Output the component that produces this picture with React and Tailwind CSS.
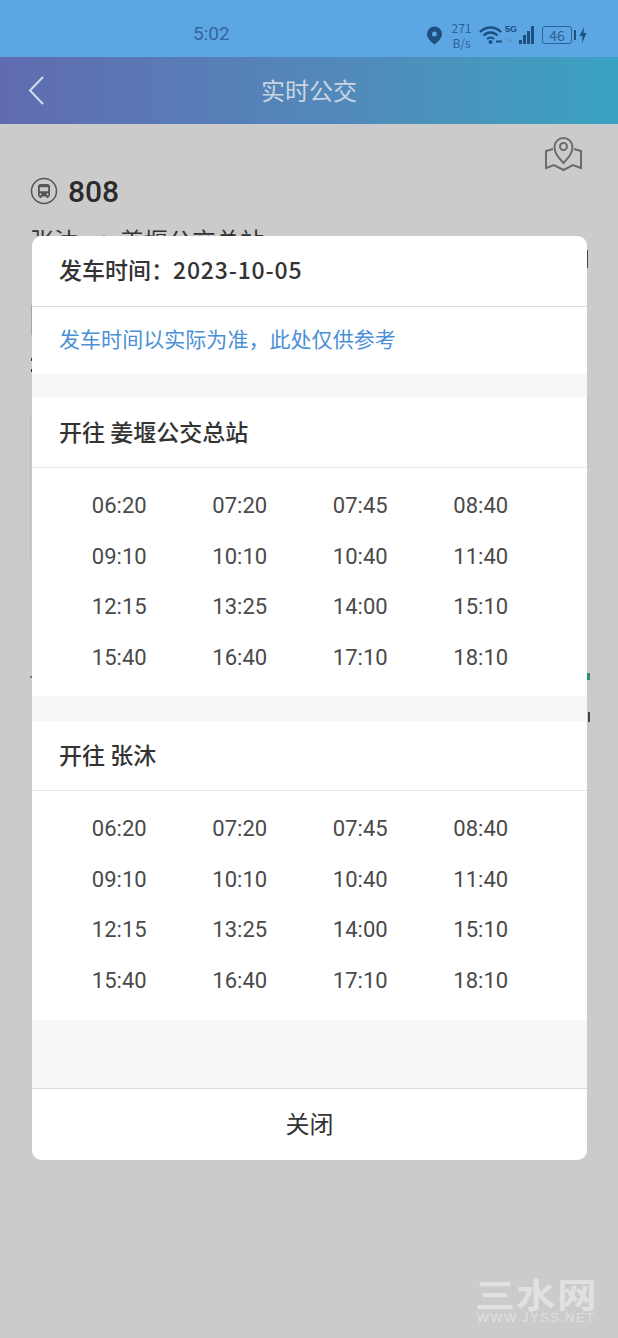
const times = [
  "06:20", "07:20", "07:45", "08:40",
  "09:10", "10:10", "10:40", "11:40",
  "12:15", "13:25", "14:00", "15:10",
  "15:40", "16:40", "17:10", "18:10",
];

function StatusIcons() {
  return (
    <div className="absolute left-[426px] top-[21px] flex h-7 items-center text-[#1d4f80]">
      <svg width="17" height="20" viewBox="0 0 17 20" className="mr-[8px]">
        <path fillRule="evenodd" fill="currentColor" d="M8.500 1.500a7.500 7.500 0 0 1 7.500 7.500c0 4-3.800 7.500-7.500 10.500C4.800 16.500 1 13 1 9a7.500 7.500 0 0 1 7.500-7.500zm0 5a2.500 2.500 0 1 0 0 5 2.500 2.500 0 0 0 0-5z" />
      </svg>
      <div className="flex w-[21px] flex-col items-center text-[12px] leading-[15px] text-[#2e6295]">
        <span>271</span>
        <span>B/s</span>
      </div>
      <svg width="24" height="20" viewBox="0 0 24 20" fill="none" stroke="currentColor" className="ml-[7px]">
        <path d="M1 7c6-6 15-6 21 0" strokeWidth="2.400" />
        <path d="M4.500 10.500c4-4 10-4 14 0" strokeWidth="2.400" />
        <path d="M8 14c2-2 5-2 7 0" strokeWidth="2.200" />
        <circle cx="11.500" cy="17" r="2" fill="currentColor" stroke="none" />
        <path d="M17 16.500h6" strokeWidth="2" />
      </svg>
      <div className="relative ml-[2px] h-5 w-[12px] font-['Liberation_Sans',sans-serif] text-[9px] font-bold leading-[9px]">
        <span className="absolute left-0 top-0">5G</span>
        <span className="absolute left-[1px] top-[11px] text-[6px] font-normal text-[#5a8bbb]">1s</span>
      </div>
      <div className="ml-[2px] flex h-[18px] items-end gap-[1px]">
        <div className="h-[4px] w-[3px] bg-current" />
        <div className="h-[9px] w-[3px] bg-current" />
        <div className="h-[13px] w-[3px] bg-current" />
        <div className="h-[18px] w-[3px] bg-current" />
      </div>
      <div className="ml-[8px] flex h-[18px] w-[30px] items-center justify-center rounded-[3px] border-[1.500px] border-current text-[14px] leading-none text-[#2e6295]">
        46
      </div>
      <div className="ml-[2px] h-[10px] w-[2px] bg-current" />
      <svg width="8" height="16" viewBox="0 0 8 16" className="ml-[3px]">
        <path fill="currentColor" d="M5 0 0.500 9H3.500L3 16l4.500-10H4.500z" />
      </svg>
    </div>
  );
}

function TimeTable({ title }) {
  return (
    <div className="bg-white">
      <div className="flex h-[70px] items-center border-b border-[#e2e4e6] pb-[2px] pl-[27px] text-[23px] font-medium text-[#333333]">
        {title}
      </div>
      <div className="grid grid-cols-[repeat(4,120.5px)] pb-[13.500px] pl-[27px] pt-[12.500px]">
        {times.map((t) => (
          <div key={t} className="flex h-[50.500px] items-center justify-center font-['Roboto',sans-serif] text-[22px] text-[#4a4a4a]">
            {t}
          </div>
        ))}
      </div>
    </div>
  );
}

export default function App() {
  return (
    <div className="relative h-[1338px] w-[618px] overflow-hidden bg-[#cbcbcb] font-['Noto_Sans_CJK_SC','Noto_Sans',sans-serif]">
      <div className="relative h-[57px] bg-[#5ca6e4]">
        <span className="absolute left-[193px] top-[22px] font-['Roboto',sans-serif] text-[19px] leading-6 text-[#34669a]">5:02</span>
        <StatusIcons />
      </div>
      <div className="relative flex h-[67px] items-center justify-center bg-gradient-to-r from-[#5f6bb0] to-[#39a2c2]">
        <svg width="20" height="32" viewBox="0 0 20 32" fill="none" stroke="#d3deea" strokeWidth="2" className="absolute left-[26px] top-[18px]">
          <path d="M17 2 4 15.500 17 29" />
        </svg>
        <span className="pb-[2px] text-[24px] text-[#c9d5e2]">实时公交</span>
      </div>

      {/* page behind the dialog, only its edges show */}
      <div className="pl-[30px] pr-[28px]">
        <div className="flex justify-end pt-[11px]">
          <svg width="38" height="37" viewBox="0 0 38 37" fill="none" stroke="#6b6b6b" strokeWidth="2" className="mr-[7px]">
            <path d="M18.500 28c-5.500-6-9-10-9-16a9 9 0 0 1 18 0c0 6-3.500 10-9 16z" />
            <circle cx="18.500" cy="11.500" r="3.500" />
            <path d="M8 14l-7 2v17l8-3 9.500 5 9.500-5 8 3V16l-7-2" />
          </svg>
        </div>
        <div className="-mt-[2px] flex h-[42px] items-center">
          <svg width="28" height="28" viewBox="0 0 28 28" fill="none">
            <circle cx="14" cy="14" r="12.500" stroke="#555555" strokeWidth="1.500" />
            <path fill="#555555" d="M8 9.500c0-1.500 1-2.500 2.500-2.500h7c1.500 0 2.500 1 2.500 2.500v10h-1.500v1.500h-2v-1.500h-5v1.500h-2v-1.500H8zm1.800.700v4h8.400v-4zm.7 6a1 1 0 1 0 0 2 1 1 0 0 0 0-2zm7 0a1 1 0 1 0 0 2 1 1 0 0 0 0-2z" />
          </svg>
          <span className="ml-[10px] font-['Roboto',sans-serif] text-[30px] font-medium text-[#2b2b2b]">808</span>
        </div>
        <div className="mb-[14px] mt-[12px] h-[12px] overflow-hidden whitespace-nowrap text-[24px] leading-8 text-[#333333]">
          张沐<span className="mx-[9px]">→</span>姜堰公交总站
        </div>
        <div className="flex h-[18px] justify-end">
          <div className="mr-[2px] w-[2px] bg-[#444444]" />
        </div>
        <div className="ml-[1px] mt-[37px] h-[30px] border-l-2 border-[#9aa8bc]" />
        <div className="mt-[23px] flex h-[14px] flex-col justify-between pl-[1px]">
          <div className="h-[3px] w-[2px] bg-[#333333]" />
          <div className="h-[3px] w-[2px] bg-[#333333]" />
        </div>
        <div className="mt-[26px] flex h-[162px] items-start justify-between">
          <div className="mt-[17px] h-[145px] w-[1px] bg-[#bdbdbd]" />
          <div className="mr-[1px] h-[69px] w-[2px] bg-[#c0c6cf]" />
        </div>
        <div className="mt-[113px] flex h-[7px] items-center justify-between">
          <div className="h-[2px] w-[2px] bg-[#777777]" />
          <div className="h-[7px] w-[3px] bg-[#2f8f75]" />
        </div>
        <div className="mt-[32px] flex h-[10px] justify-end">
          <div className="w-[2px] bg-[#444444]" />
        </div>
      </div>

      {/* dialog */}
      <div className="absolute left-[32px] top-[236px] flex h-[924px] w-[555px] flex-col overflow-hidden rounded-[10px] bg-[#f7f7f7]">
        <div className="flex h-[71px] items-center border-b border-[#d9dde1] bg-white pb-[4px] pl-[27px] text-[23px] font-medium text-[#333333]">
          发车时间：<span className="-ml-[1px] tracking-[0.8px]">2023-10-05</span>
        </div>
        <div className="mb-[24px] flex h-[67px] items-center bg-white pb-[3px] pl-[27px] text-[21px] tracking-[0.05px] text-[#4a90d8]">
          发车时间以实际为准，此处仅供参考
        </div>
        <TimeTable title="开往 姜堰公交总站" />
        <div className="h-[25px]" />
        <TimeTable title="开往 张沐" />
        <div className="h-[1px] bg-white" />
        <button className="mt-auto flex h-[72px] items-center justify-center border-t border-[#d9d9d9] bg-white pb-[4px] text-[24px] text-[#333333]">
          关闭
        </button>
      </div>

      {/* watermark */}
      <div className="absolute left-[475px] top-[1277px] flex w-[122px] flex-col items-center text-[#dfe1e2]">
        <span className="scale-x-[1.17] text-[34px] font-bold leading-[34px] tracking-[1px]">三水网</span>
        <span className="font-['Liberation_Sans',sans-serif] text-[13px] leading-[14px] tracking-[1.4px]">WWW.JYSS.NET</span>
      </div>
    </div>
  );
}
